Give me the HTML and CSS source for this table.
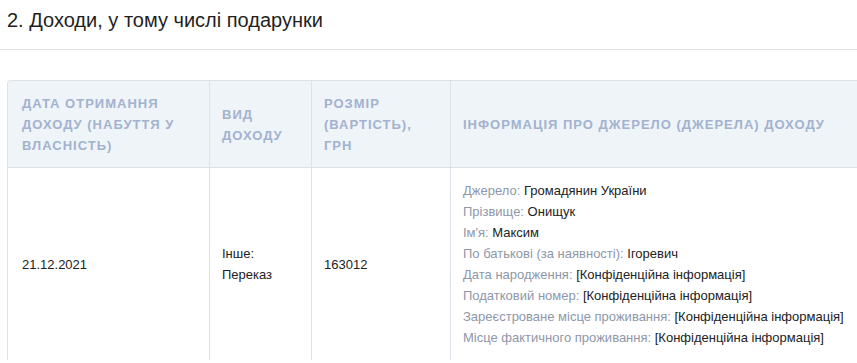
FILE: index.html
```html
<!DOCTYPE html>
<html lang="uk">
<head>
<meta charset="utf-8">
<link rel="stylesheet" href="styles.css">
</head>
<body>
<div class="section">
  <h2 class="title">2. Доходи, у тому числі подарунки</h2>
</div>
<hr class="divider">
<div class="table-wrap">
  <table class="data">
    <thead>
      <tr>
        <th class="c1">Дата отримання доходу (набуття у власність)</th>
        <th class="c2">Вид доходу</th>
        <th class="c3">Розмір (вартість), грн</th>
        <th class="c4">Інформація про джерело (джерела) доходу</th>
      </tr>
    </thead>
    <tbody>
      <tr>
        <td>21.12.2021</td>
        <td>Інше:<br>Переказ</td>
        <td>163012</td>
        <td>
          <div><span class="lbl">Джерело:</span> Громадянин України</div>
          <div><span class="lbl">Прізвище:</span> Онищук</div>
          <div><span class="lbl">Ім'я:</span> Максим</div>
          <div><span class="lbl">По батькові (за наявності):</span> Ігоревич</div>
          <div><span class="lbl">Дата народження:</span> [Конфіденційна інформація]</div>
          <div><span class="lbl">Податковий номер:</span> [Конфіденційна інформація]</div>
          <div><span class="lbl">Зареєстроване місце проживання:</span> [Конфіденційна інформація]</div>
          <div><span class="lbl">Місце фактичного проживання:</span> [Конфіденційна інформація]</div>
        </td>
      </tr>
    </tbody>
  </table>
</div>
</body>
</html>
```

FILE: styles.css
```css
html, body {
  margin: 0;
  padding: 0;
  background: #fff;
  overflow: hidden;
}
body {
  font-family: "Liberation Sans", Arial, sans-serif;
  color: #222;
}
.section {
  padding: 7px 7px 0;
}
.title {
  margin: 0;
  font-size: 20px;
  font-weight: normal;
  line-height: 26px;
  color: #1f1f1f;
}
.divider {
  margin: 16px 0 0;
  border: 0;
  border-top: 1px solid #e2e2e2;
  height: 0;
}
.table-wrap {
  padding: 30px 0 0 7px;
}
.data {
  width: 940px;
  border-collapse: separate;
  border-spacing: 0;
  border-top: 1px solid #dde2e8;
  border-left: 1px solid #dde2e8;
  border-top-left-radius: 4px;
  table-layout: fixed;
}
.data th, .data td {
  border-right: 1px solid #dde2e8;
  text-align: left;
  vertical-align: middle;
}
.data th {
  padding: 12px 14px 11px 12px;
  border-bottom: 1px solid #dde2e8;
  background: #eff4f8;
  color: #a2b2cf;
  font-size: 13px;
  font-weight: bold;
  text-transform: uppercase;
  letter-spacing: 1px;
  line-height: 21px;
}
.data th:first-child {
  border-top-left-radius: 4px;
}
.data th:first-child, .data td:first-child {
  padding-left: 14px;
}
.c1 { width: 173px; }
.c2 { width: 75px; }
.c3 { width: 112px; }
.data td {
  padding: 12px 14px 12px 12px;
  font-size: 13px;
  line-height: 21px;
  color: #222;
}
.lbl {
  color: #8e97a8;
}
```
